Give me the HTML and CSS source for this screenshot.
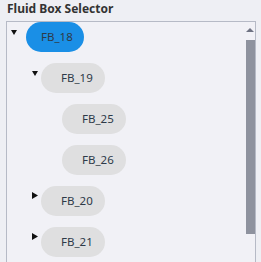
FILE: index.html
```html
<!DOCTYPE html>
<html lang="en">
<head>
  <meta charset="UTF-8">
  <title>Fluid Box Selector</title>
  <link rel="stylesheet" href="styles.css">
</head>
<body>
  <div class="title">Fluid Box Selector</div>

  <div class="panel">
    <div class="tree">
      <div class="row lvl0">
        <span class="toggle">
          <svg width="6" height="5" viewBox="0 0 6 5"><polygon points="0,0 6,0 3,5" /></svg>
        </span>
        <span class="pill selected">FB_18</span>
      </div>
      <div class="row lvl1">
        <span class="toggle">
          <svg width="6" height="5" viewBox="0 0 6 5"><polygon points="0,0 6,0 3,5" /></svg>
        </span>
        <span class="pill">FB_19</span>
      </div>
      <div class="row lvl2">
        <span class="toggle"></span>
        <span class="pill">FB_25</span>
      </div>
      <div class="row lvl2">
        <span class="toggle"></span>
        <span class="pill">FB_26</span>
      </div>
      <div class="row lvl1">
        <span class="toggle closed">
          <svg width="6" height="7" viewBox="0 0 6 7"><polygon points="0,0 6,3.5 0,7" /></svg>
        </span>
        <span class="pill">FB_20</span>
      </div>
      <div class="row lvl1">
        <span class="toggle closed">
          <svg width="6" height="7" viewBox="0 0 6 7"><polygon points="0,0 6,3.5 0,7" /></svg>
        </span>
        <span class="pill">FB_21</span>
      </div>
    </div>

    <div class="scrollbar">
      <svg class="arrow" width="8" height="4" viewBox="0 0 8 4"><polygon points="0,4 4,0 8,4" /></svg>
      <div class="thumb"></div>
    </div>
  </div>
</body>
</html>
```

FILE: styles.css
```css
body {
  margin: 0;
  background: #eeeff4;
  font-family: "Noto Sans", "Liberation Sans", sans-serif;
  color: #2e3440;
}
.title {
  font-size: 12px;
  font-weight: bold;
  line-height: 18px;
  padding-left: 7px;
  margin-bottom: 3px;
  color: #333;
}
.panel {
  margin-left: 6px;
  width: 248px;
  height: 260px;
  border: 1px solid #b6bac6;
  background: #f1f1f6;
  display: flex;
}
.tree {
  flex: 1;
  display: flex;
  flex-direction: column;
  gap: 11px;
}
.row {
  display: flex;
  align-items: flex-start;
  height: 30px;
}
.lvl0 { padding-left: 4px; }
.lvl1 { padding-left: 25px; }
.lvl2 { padding-left: 46px; }
.toggle {
  width: 9px;
  flex: none;
  margin-top: 7px;
  line-height: 0;
}
.toggle.closed {
  margin-top: 6px;
}
.toggle svg {
  fill: #111;
}
.pill {
  box-sizing: border-box;
  width: 64px;
  height: 30px;
  line-height: 30px;
  padding-left: 20px;
  border-radius: 15px;
  background: #dfdfe0;
  font-size: 11.5px;
  color: #2e3a48;
}
.pill.selected {
  width: 58px;
  margin-left: 6px;
  padding-left: 15px;
  background: #1a8fe6;
}
.scrollbar {
  width: 10px;
  display: flex;
  flex-direction: column;
  align-items: center;
}
.arrow {
  margin-top: 6px;
  fill: #6e7282;
}
.thumb {
  margin-top: 8px;
  width: 9px;
  height: 194px;
  background: #8e929e;
}
```
